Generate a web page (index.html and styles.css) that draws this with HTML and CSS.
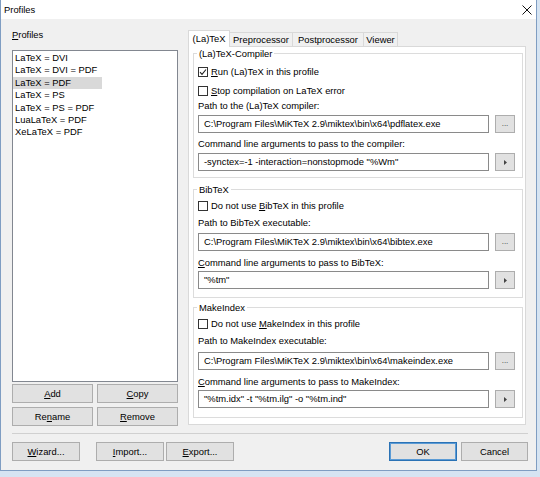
FILE: index.html
```html
<!DOCTYPE html>
<html>
<head>
<meta charset="utf-8">
<title>Profiles</title>
<link rel="stylesheet" href="styles.css">
</head>
<body>
<div class="window">
  <div class="titlebar">
    <span class="title">Profiles</span>
    <svg class="close" width="10" height="10" viewBox="0 0 10 10"><path d="M0.5 0.5L9.5 9.5M9.5 0.5L0.5 9.5" stroke="#111" stroke-width="1" fill="none"/></svg>
  </div>
  <div class="client">
    <div class="main">
      <div class="left">
        <div class="label"><u>P</u>rofiles</div>
        <div class="listbox">
          <div class="item">LaTeX = DVI</div>
          <div class="item">LaTeX = DVI = PDF</div>
          <div class="item selected">LaTeX = PDF</div>
          <div class="item">LaTeX = PS</div>
          <div class="item">LaTeX = PS = PDF</div>
          <div class="item">LuaLaTeX = PDF</div>
          <div class="item">XeLaTeX = PDF</div>
        </div>
        <div class="btngrid">
          <div class="btn"><u>A</u>dd</div>
          <div class="btn"><u>C</u>opy</div>
          <div class="btn">Re<u>n</u>ame</div>
          <div class="btn"><u>R</u>emove</div>
        </div>
      </div>
      <div class="right">
        <div class="tabs">
          <div class="tab active">(La)TeX</div>
          <div class="tab t-pre">Preprocessor</div>
          <div class="tab t-post">Postprocessor</div>
          <div class="tab t-view">Viewer</div>
        </div>
        <div class="panel">
          <div class="group g1">
            <span class="legend">(La)TeX-Compiler</span>
            <div class="check"><span class="box"><svg width="8" height="8" viewBox="0 0 8 8"><path d="M1 4.2L3 6.3L7 1.5" stroke="#222" stroke-width="1.1" fill="none"/></svg></span><span><u>R</u>un (La)TeX in this profile</span></div>
            <div class="check"><span class="box"></span><span><u>S</u>top compilation on LaTeX error</span></div>
            <div class="flabel first">Path to the (La)TeX compiler:</div>
            <div class="field f-a">
              <div class="textbox">C:\Program Files\MiKTeX 2.9\miktex\bin\x64\pdflatex.exe</div>
              <div class="sbtn">...</div>
            </div>
            <div class="flabel second">Command line arguments to pass to the compiler:</div>
            <div class="field f-b">
              <div class="textbox">-synctex=-1 -interaction=nonstopmode "%Wm"</div>
              <div class="sbtn"><svg width="3" height="5" viewBox="0 0 3 5"><path d="M0 0L3 2.5L0 5Z" fill="#444"/></svg></div>
            </div>
          </div>
          <div class="group g2">
            <span class="legend">BibTeX</span>
            <div class="check"><span class="box"></span><span>Do not use <u>B</u>ibTeX in this profile</span></div>
            <div class="flabel first">Path to BibTeX executable:</div>
            <div class="field f-a">
              <div class="textbox">C:\Program Files\MiKTeX 2.9\miktex\bin\x64\bibtex.exe</div>
              <div class="sbtn">...</div>
            </div>
            <div class="flabel second"><u>C</u>ommand line arguments to pass to BibTeX:</div>
            <div class="field f-b">
              <div class="textbox">"%tm"</div>
              <div class="sbtn"><svg width="3" height="5" viewBox="0 0 3 5"><path d="M0 0L3 2.5L0 5Z" fill="#444"/></svg></div>
            </div>
          </div>
          <div class="group g3">
            <span class="legend">MakeIndex</span>
            <div class="check"><span class="box"></span><span>Do not use <u>M</u>akeIndex in this profile</span></div>
            <div class="flabel first">Path to MakeIndex executable:</div>
            <div class="field f-a">
              <div class="textbox">C:\Program Files\MiKTeX 2.9\miktex\bin\x64\makeindex.exe</div>
              <div class="sbtn">...</div>
            </div>
            <div class="flabel second"><u>C</u>ommand line arguments to pass to MakeIndex:</div>
            <div class="field f-b">
              <div class="textbox">"%tm.idx" -t "%tm.ilg" -o "%tm.ind"</div>
              <div class="sbtn"><svg width="3" height="5" viewBox="0 0 3 5"><path d="M0 0L3 2.5L0 5Z" fill="#444"/></svg></div>
            </div>
          </div>
        </div>
      </div>
    </div>
    <div class="separator"></div>
    <div class="footer">
      <div class="btn fbtn"><u>W</u>izard...</div>
      <div class="btn fbtn b-import"><u>I</u>mport...</div>
      <div class="btn fbtn b-export"><u>E</u>xport...</div>
      <div class="btn fbtn b-ok default">OK</div>
      <div class="btn fbtn b-cancel">Cancel</div>
    </div>
  </div>
</div>
</body>
</html>
```
FILE: styles.css
```css
* { box-sizing: border-box; }
html, body { margin: 0; padding: 0; }
body {
  width: 540px;
  height: 477px;
  overflow: hidden;
  background: #d6e4f2;
  font-family: "Liberation Sans", Arial, sans-serif;
  font-size: 9.4px;
  color: #000;
}
u { text-underline-offset: 1px; }

.window {
  width: 537px;
  height: 471px;
  background: #f0f0f0;
  border: 1px solid #7f9dc2;
  border-top: none;
  display: flex;
  flex-direction: column;
}
.titlebar {
  height: 19px;
  background: #fff;
  display: flex;
  align-items: center;
  justify-content: space-between;
  padding: 0 4px 0 3px;
}
.close { display: block; }

.client { display: flex; flex-direction: column; }
.main { display: flex; padding-left: 11px; height: 407px; }

.left { width: 166px; padding-top: 9px; }
.label { height: 14px; line-height: 14px; }
.listbox {
  margin-top: 8px;
  height: 332px;
  padding-top: 1px;
  background: #fff;
  border: 1px solid #828790;
}
.item {
  width: 89px;
  height: 12.4px;
  line-height: 12.4px;
  padding-left: 2px;
  white-space: nowrap;
}
.item.selected { background: #d9d9d9; }

.btngrid {
  margin-top: 2px;
  display: grid;
  grid-template-columns: 81px 81px;
  gap: 4px;
}
.btn {
  height: 19px;
  line-height: 17px;
  text-align: center;
  background: #e1e1e1;
  border: 1px solid #adadad;
  white-space: nowrap;
}

.right { margin-left: 10px; width: 338px; padding-top: 11px; }
.tabs {
  height: 16px;
  display: flex;
  align-items: flex-end;
  position: relative;
  z-index: 1;
}
.tab {
  height: 14px;
  line-height: 13px;
  text-align: center;
  background: #f0f0f0;
  border: 1px solid #d9d9d9;
  border-bottom: none;
  margin-left: -1px;
}
.tab.active {
  height: 17px;
  line-height: 15px;
  width: 42px;
  margin-left: 0;
  margin-bottom: -1px;
  background: #fff;
  position: relative;
  z-index: 2;
}
.t-pre { width: 64px; }
.t-post { width: 72px; }
.t-view { width: 35px; }

.panel {
  height: 379px;
  background: #fff;
  border: 1px solid #d9d9d9;
  padding: 6px 2px 0 4px;
}
.group {
  position: relative;
  border: 1px solid #dcdcdc;
  padding-left: 4px;
}
.legend {
  position: absolute;
  top: -7px;
  left: 3px;
  padding: 0 2px;
  line-height: 13px;
  background: #fff;
  white-space: nowrap;
}
.g1 { height: 125px; padding-top: 8px; }
.g2 { height: 109px; margin-top: 11px; padding-top: 6px; }
.g3 { height: 111px; margin-top: 9px; padding-top: 6px; }

.check {
  height: 19px;
  display: flex;
  align-items: center;
  gap: 3px;
}
.box {
  width: 10px;
  height: 10px;
  border: 1px solid #333;
  background: #fff;
  display: flex;
  align-items: center;
  justify-content: center;
}
.box svg { display: block; }

.flabel { height: 14px; line-height: 14px; white-space: nowrap; }
.g1 .flabel.first { margin-top: -1px; }
.g1 .f-a { margin-top: 2px; }
.g1 .flabel.second { margin-top: 4px; }
.g1 .f-b { margin-top: 2px; }
.g2 .flabel.first, .g3 .flabel.first { margin-top: 1px; }
.g2 .f-a { margin-top: 3px; }
.g3 .f-a { margin-top: 4px; }
.g2 .flabel.second, .g3 .flabel.second { margin-top: 5px; }
.g2 .f-b, .g3 .f-b { margin-top: 1px; }

.field { display: flex; gap: 6px; height: 18px; }
.textbox {
  width: 291px;
  height: 18px;
  line-height: 16px;
  padding-left: 5px;
  background: #fff;
  border: 1px solid #8a8a8a;
  white-space: nowrap;
  overflow: hidden;
}
.sbtn {
  width: 20px;
  height: 18px;
  background: #e1e1e1;
  border: 1px solid #adadad;
  display: flex;
  align-items: center;
  justify-content: center;
  line-height: 14px;
  font-size: 8px;
  color: #333;
}
.sbtn svg { display: block; }

.separator {
  margin: 7px 8px 0 11px;
  height: 1px;
  background: #d0d0d0;
}
.footer {
  display: flex;
  margin-top: 8px;
  padding: 0 8px 0 11px;
}
.fbtn { width: 68px; }
.b-import { margin-left: 16px; }
.b-export { margin-left: 2px; }
.b-ok { margin-left: auto; }
.b-cancel { margin-left: 4px; width: 67px; }
.default {
  border-color: #2a72b5;
  box-shadow: inset 0 0 0 1px #5b9bd5;
}
```
